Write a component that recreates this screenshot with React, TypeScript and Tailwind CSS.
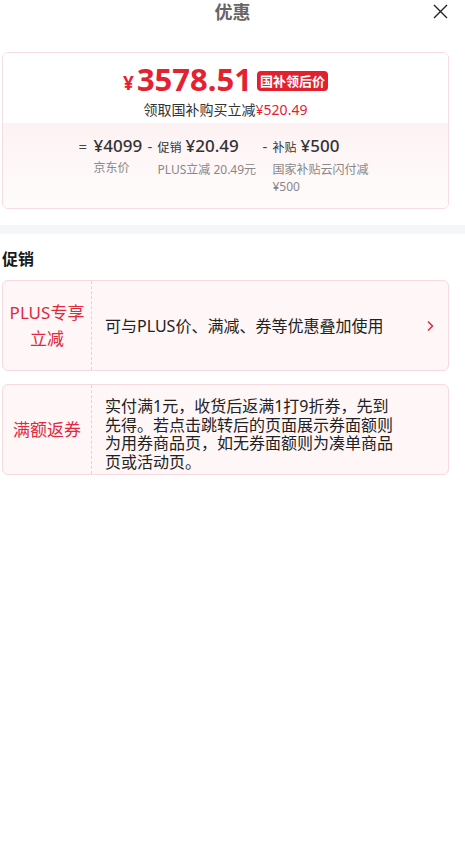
export default function App() {
  const font = { fontFamily: '"Noto Sans", "Noto Sans CJK SC", sans-serif' };

  return (
    <div className="min-h-screen w-full bg-white text-[#222]" style={font}>
      {/* Header */}
      <div className="relative flex h-6 items-center justify-center">
        <span className="text-[18px] font-bold leading-6 text-[#666]">优惠</span>
        <svg
          className="absolute right-[17px] top-[4px]"
          width="15"
          height="15"
          viewBox="0 0 15 15"
          fill="none"
          stroke="#222"
          strokeWidth="1.4"
        >
          <path d="M1 1L14 14M14 1L1 14" />
        </svg>
      </div>

      {/* Price card */}
      <div className="mx-[2px] mt-[28px] w-[447px] overflow-hidden rounded-md border border-[#f5dde1]">
        <div className="flex h-[70px] flex-col items-center bg-white pt-[11px]">
          <div className="flex h-[30px] items-center">
            <span className="mt-[8px] text-[19px] font-bold leading-none text-[#e6212f]">¥</span>
            <span className="ml-[3px] text-[31px] font-bold leading-[30px] text-[#e6212f]">3578.51</span>
            <span className="ml-[5px] mt-[4px] flex h-5 items-center rounded-sm bg-[#e4202e] px-[3px] text-[13px] font-bold leading-none text-white">
              国补领后价
            </span>
          </div>
          <div className="mt-[7px] text-[14px] leading-[18px] text-[#333]">
            领取国补购买立减<span className="text-[#e6212f]">¥520.49</span>
          </div>
        </div>

        <div className="flex h-[85px] justify-center bg-gradient-to-b from-[#fdf2f3] to-[#fffcfc] pt-[12px]">
          <div className="flex">
            <span className="w-[15px] text-[15px] leading-[22px] text-[#444]">=</span>
            <div className="w-[54px]">
              <div className="text-[17px] font-medium leading-[22px] text-[#333]">¥4099</div>
              <div className="mt-[2px] text-[12px] leading-[17px] text-[#888]">京东价</div>
            </div>
          </div>
          <div className="flex">
            <span className="w-[10px] text-[15px] leading-[22px] text-[#444]">-</span>
            <div className="w-[105px]">
              <div className="flex items-baseline leading-[22px] text-[#333]">
                <span className="text-[12px]">促销</span>
                <span className="ml-[4px] text-[17px] font-medium">¥20.49</span>
              </div>
              <div className="mt-[2px] text-[12px] leading-[17px] text-[#888]">PLUS立减 20.49元</div>
            </div>
          </div>
          <div className="flex">
            <span className="w-[10px] text-[15px] leading-[22px] text-[#444]">-</span>
            <div className="w-[100px]">
              <div className="flex items-baseline leading-[22px] text-[#333]">
                <span className="text-[12px]">补贴</span>
                <span className="ml-[4px] text-[17px] font-medium">¥500</span>
              </div>
              <div className="mt-[2px] text-[12px] leading-[17px] text-[#888]">国家补贴云闪付减 ¥500</div>
            </div>
          </div>
        </div>
      </div>

      {/* Divider band */}
      <div className="mt-4 h-[9px] bg-[#f5f6f8]" />

      {/* Promotions */}
      <div className="px-[2px]">
        <h2 className="mt-[14px] text-[16px] font-bold leading-[22px] text-[#1a1a1a]">促销</h2>

        <div className="mt-[10px] flex h-[91px] w-[447px] rounded-md border border-[#f5dade] bg-[#fef6f7]">
          <div className="flex w-[89px] items-center justify-center border-r border-dashed border-[#e9cfd4] text-center text-[17px] leading-[26px] text-[#e2283e]">
            PLUS专享
            <br />
            立减
          </div>
          <div className="flex flex-1 items-center justify-between pl-[13px] pr-[14px]">
            <span className="text-[16px] leading-[22px] text-[#222]">可与PLUS价、满减、券等优惠叠加使用</span>
            <svg width="8" height="12" viewBox="0 0 8 12" fill="none" stroke="#e2283e" strokeWidth="1.5">
              <path d="M2 1.5L6.5 6L2 10.5" />
            </svg>
          </div>
        </div>

        <div className="mt-[13px] flex h-[91px] w-[447px] rounded-md border border-[#f5dade] bg-[#fef6f7]">
          <div className="flex w-[89px] items-center justify-center border-r border-dashed border-[#e9cfd4] text-[17px] leading-[26px] text-[#e2283e]">
            满额返券
          </div>
          <div className="flex-1 whitespace-nowrap pl-[13px] pt-[12px] text-[16px] leading-[18.5px] text-[#222]">
            实付满1元，收货后返满1打9折券，先到
            <br />
            先得。若点击跳转后的页面展示券面额则
            <br />
            为用券商品页，如无券面额则为凑单商品
            <br />
            页或活动页。
          </div>
        </div>
      </div>
    </div>
  );
}
